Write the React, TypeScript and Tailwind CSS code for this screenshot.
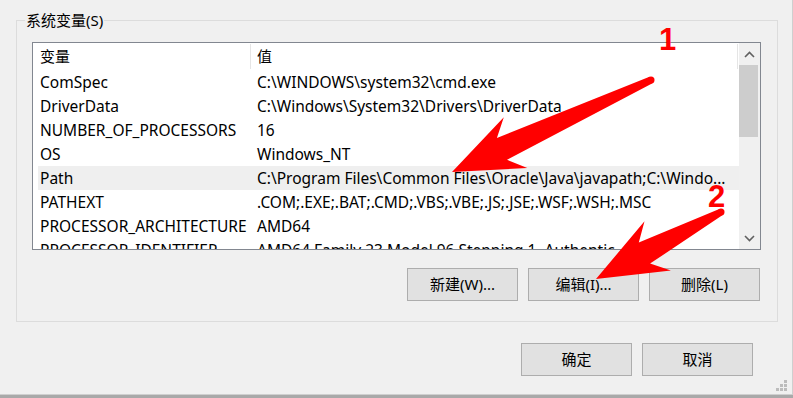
import React from "react";

const rows: [string, string][] = [
  ["ComSpec", "C:\\WINDOWS\\system32\\cmd.exe"],
  ["DriverData", "C:\\Windows\\System32\\Drivers\\DriverData"],
  ["NUMBER_OF_PROCESSORS", "16"],
  ["OS", "Windows_NT"],
  ["Path", "C:\\Program Files\\Common Files\\Oracle\\Java\\javapath;C:\\Windo..."],
  ["PATHEXT", ".COM;.EXE;.BAT;.CMD;.VBS;.VBE;.JS;.JSE;.WSF;.WSH;.MSC"],
  ["PROCESSOR_ARCHITECTURE", "AMD64"],
  ["PROCESSOR_IDENTIFIER", "AMD64 Family 23 Model 96 Stepping 1, Authentic..."],
];

function arrowPoints(tx: number, ty: number, px: number, py: number) {
  const dx = px - tx;
  const dy = py - ty;
  const L = Math.hypot(dx, dy);
  const ux = dx / L;
  const uy = dy / L;
  const nx = -uy;
  const ny = ux;
  const at = (t: number, w: number) =>
    `${(px - ux * t + nx * w).toFixed(1)},${(py - uy * t + ny * w).toFixed(1)}`;
  return [
    at(0, 0),
    at(70, 28),
    at(55, 12),
    at(L, 3.5),
    at(L, -3.5),
    at(55, -12),
    at(70, -28),
  ].join(" ");
}

function Btn({ label }: { label: string }) {
  return (
    <div className="w-[111px] h-[33px] bg-[#e1e1e1] border border-[#adadad] flex items-center justify-center text-[15px] text-black">
      {label}
    </div>
  );
}

export default function App() {
  return (
    <div
      className="relative w-[793px] h-[398px] bg-[#a9a9a9] overflow-hidden text-black"
      style={{ fontFamily: '"Noto Sans", "Noto Sans CJK SC", sans-serif' }}
    >
      <div className="w-[793px] h-[395px] bg-[#f0f0f0] border-r border-b border-[#cfcfcf] flex flex-col">
        {/* group box */}
        <div className="relative ml-[16px] mt-[20px] w-[762px] h-[302px] border border-[#dcdcdc] flex flex-col pl-[15px] pr-[15px] pt-[21px]">
          <div className="absolute left-[8px] top-[-11px] bg-[#f0f0f0] px-[1px] text-[15px] leading-[20px]">
            系统变量(S)
          </div>
          {/* list box */}
          <div className="w-[729px] h-[208px] border border-[#828790] bg-white flex overflow-hidden">
            <div className="w-[706px] flex flex-col overflow-hidden">
              {/* header */}
              <div className="h-[27px] shrink-0 flex text-[15px]">
                <div className="w-[217px] pl-[7px] flex items-center">变量</div>
                <div className="w-[488px] pl-[6px] flex items-center border-l border-r border-[#e5e5e5] my-[1px]">
                  值
                </div>
              </div>
              {rows.map(([k, v], i) => (
                <div
                  key={k}
                  className={`h-[24px] shrink-0 ml-[5px] pt-[1px] flex items-center text-[15.5px] whitespace-nowrap ${
                    i === 4 ? "bg-[#efefef]" : ""
                  }`}
                >
                  <div className="w-[212px] shrink-0 pl-[2px] overflow-hidden">{k}</div>
                  <div className="shrink-0 pl-[7px]">{v}</div>
                </div>
              ))}
            </div>
            {/* scrollbar */}
            <div className="w-[21px] bg-[#f0f0f0] flex flex-col">
              <div className="h-[22px] flex items-center justify-center">
                <svg width="11" height="7" viewBox="0 0 11 7">
                  <polyline points="1,6 5.5,1.5 10,6" fill="none" stroke="#606060" strokeWidth="1.6" />
                </svg>
              </div>
              <div className="h-[72px] w-[19px] bg-[#cdcdcd]" />
              <div className="flex-1" />
              <div className="h-[22px] flex items-center justify-center">
                <svg width="11" height="7" viewBox="0 0 11 7">
                  <polyline points="1,1 5.5,5.5 10,1" fill="none" stroke="#606060" strokeWidth="1.6" />
                </svg>
              </div>
            </div>
          </div>
          {/* buttons */}
          <div className="mt-[18px] mr-[2px] flex justify-end gap-[10px]">
            <Btn label="新建(W)..." />
            <Btn label="编辑(I)..." />
            <Btn label="删除(L)" />
          </div>
        </div>
        {/* OK / Cancel */}
        <div className="mt-[21px] flex justify-end gap-[10px] pr-[39px]">
          <Btn label="确定" />
          <Btn label="取消" />
        </div>
      </div>

      {/* resize grip */}
      <div className="absolute left-[776px] top-[380px] grid grid-cols-3 gap-[1px]">
        <span className="w-[3px] h-[3px]" />
        <span className="w-[3px] h-[3px]" />
        <span className="w-[3px] h-[3px] bg-[#bcbcbc]" />
        <span className="w-[3px] h-[3px]" />
        <span className="w-[3px] h-[3px] bg-[#bcbcbc]" />
        <span className="w-[3px] h-[3px] bg-[#bcbcbc]" />
        <span className="w-[3px] h-[3px] bg-[#bcbcbc]" />
        <span className="w-[3px] h-[3px] bg-[#bcbcbc]" />
        <span className="w-[3px] h-[3px] bg-[#bcbcbc]" />
      </div>

      {/* annotation arrows */}
      <svg className="absolute left-0 top-0 pointer-events-none" width="793" height="398">
        <polygon points={arrowPoints(651, 80, 452, 172)} fill="#ff0000" />
        <circle cx="651" cy="80" r="3.5" fill="#ff0000" />
        <polygon points={arrowPoints(721, 212, 596, 279)} fill="#ff0000" />
        <circle cx="721" cy="212" r="3.5" fill="#ff0000" />
      </svg>
      <span
        className="absolute left-[659px] top-[22px] text-[31px] leading-[36px] font-bold text-[#ff0000]"
        style={{ fontFamily: '"Liberation Sans", Arial, sans-serif' }}
      >
        1
      </span>
      <span
        className="absolute left-[708px] top-[179px] text-[31px] leading-[36px] font-bold text-[#ff0000]"
        style={{ fontFamily: '"Liberation Sans", Arial, sans-serif' }}
      >
        2
      </span>
    </div>
  );
}
